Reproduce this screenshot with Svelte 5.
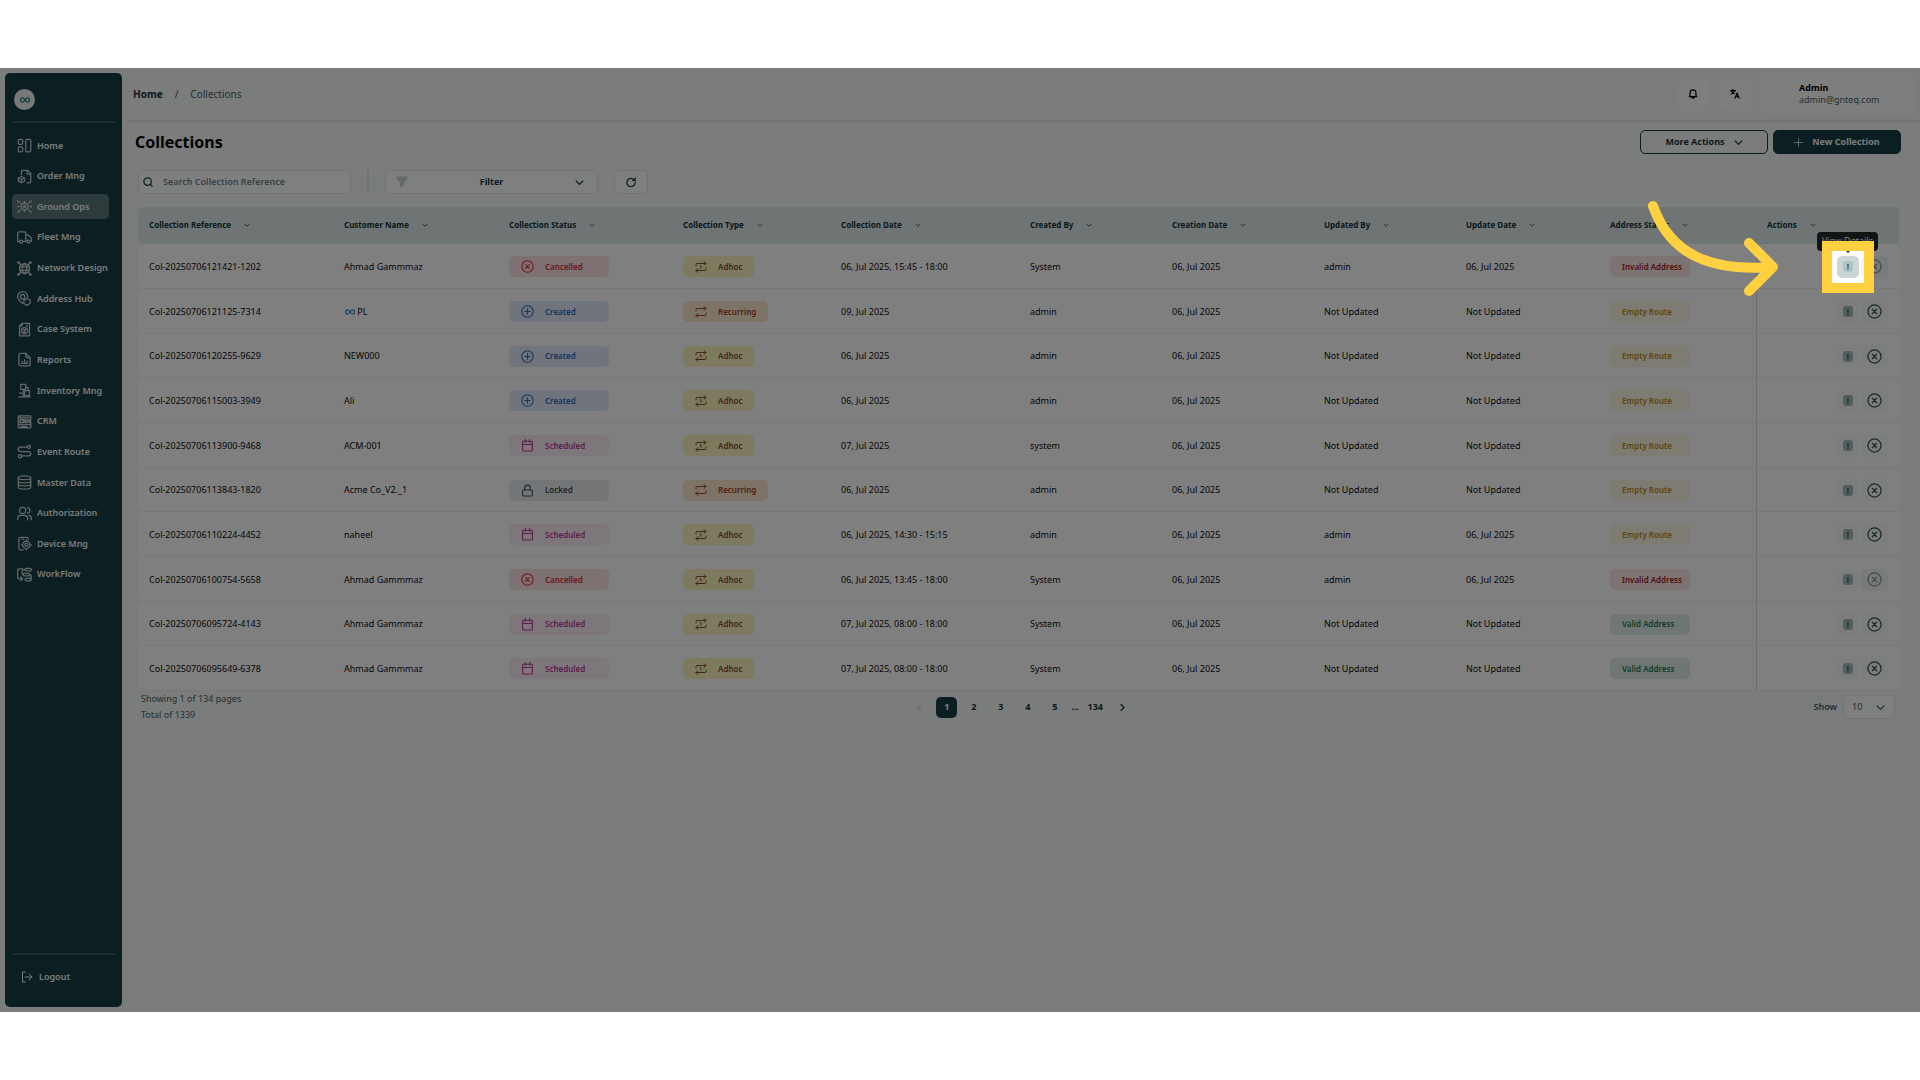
<script>
    const icons = {
        home: '<rect x="2" y="2" width="7" height="8" rx="2"/><rect x="2" y="14" width="7" height="8" rx="2"/><rect x="14" y="2" width="8" height="20" rx="2"/>',
        order: '<path d="M7 9V4q0-2 2-2h8l5 5v12q0 3-3 3h-3M16 2v4q0 2 2 2h4"/><path d="M7 12l5 2.500v5L7 22l-5-2.500v-5zM2 14.500l5 2.500 5-2.500M7 17v5"/>',
        ground: '<circle cx="12" cy="12" r="5.500"/><circle cx="12" cy="12" r="1.500"/><path d="M12 6.500V4M12 20v-2.500M0 12h3M21 12h3M1 3l4 3M23 3l-4 3M1 21l4-3M23 21l-4-3"/>',
        fleet: '<path d="M4 18H2q-1 0-1-2V5q0-2 2-2h9q2 0 2 2v13H9M14 8h4l5 5v5h-2M14 18h2"/><circle cx="6.500" cy="18.500" r="2.500"/><circle cx="18.500" cy="18.500" r="2.500"/>',
        network: '<circle cx="12" cy="12" r="8"/><path d="M4 9.500h16M4 14.500h16M12 4c-5 5-5 11 0 16M12 4c5 5 5 11 0 16M6 6L2 2M18 6l4-4M6 18l-4 4M18 18l4 4"/><circle cx="2.500" cy="2.500" r="1"/><circle cx="21.500" cy="2.500" r="1"/><circle cx="2.500" cy="21.500" r="1"/><circle cx="21.500" cy="21.500" r="1"/>',
        address: '<path d="M9 20C4 15 1 13 1 9a8 8 0 0 1 16 0v1"/><circle cx="9" cy="9" r="3.500"/><path d="M16 12l5 2.500v5L16 23l-5-3v-5z"/>',
        caseSystem: '<path d="M8 2h12v20H4V6zM8 2v4H4"/><circle cx="12" cy="14" r="5"/><path d="M9 17l6-6M10 12h2M12 16h2M16 5v2"/>',
        reports: '<path d="M14 2H6Q3 2 3 5v14q0 3 3 3h12q3 0 3-3V9M14 2v4q0 3 3 3h4zM8 18v-3M12 18v-6M16 18v-4M7 18h10"/>',
        inventory: '<rect x="6" y="2" width="8" height="8"/><rect x="12" y="12" width="8" height="8"/><path d="M10 10v12M3 22h18M4 16h6M14 7h4v5"/>',
        crm: '<path d="M2 3h20v19H2zM2 6h20M5 3v3M2 17h20M6 20h10"/><path stroke-width="2.500" d="M8 9H5v5h3M10 14V9h3v3h-2l3 2M16 14V9l2 3 2-3v5"/>',
        route: '<circle cx="19" cy="4.500" r="2.500"/><circle cx="5" cy="19.500" r="2.500"/><path d="M16 5H6q-4 0-4 3.500T6 12h12q4 0 4 3.500T18 19H8"/>',
        data: '<ellipse cx="12" cy="4.500" rx="10" ry="3"/><path d="M2 4.500v15c0 4 20 4 20 0v-15M2 9.500c0 4 20 4 20 0M2 14.500c0 4 20 4 20 0"/>',
        users: '<circle cx="9" cy="7" r="5"/><path d="M1 22v-2q0-5 5-5h6q5 0 5 5v2M17 2.500q4 1.500 4 4.500t-4 4.500M19 15q4 1 4 5v2"/>',
        device: '<path d="M10 22H5q-2 0-2-2V4q0-2 2-2h11q2 0 2 2v1M8 5h3"/><circle cx="15" cy="14" r="6"/><circle cx="15" cy="14" r="2.500"/><path d="M15 6v2M15 20v2M7 14h2M21 14h2"/>',
        workflow: '<path d="M9 3H3Q1 3 1 5v11q0 3 3 3h4M6 16l3 3-3 3"/><rect x="13" y="2" width="10" height="4" rx="2"/><rect x="10" y="10" width="10" height="4" rx="2"/><rect x="13" y="18" width="10" height="4" rx="2"/><path d="M13 4h-2q-3 0-3 4t2 4M20 12q3 0 3 3t-3 3"/>',
        logout: '<path d="M9 2H3v20h6M8 12h14M16 6l6 6-6 6"/>',
        bell: '<path d="M3 18h18l-2-3V9c0-9-14-9-14 0v6zM9 21h6"/>',
        translate: '<path d="M1 4h12M7 1v3M11 4q-2 6-8 8M4 5q2 4 6 6M12 22l5-12 5 12M14 18h6"/>',
        search: '<circle cx="11" cy="11" r="9"/><path d="M18 18l4 4"/>',
        funnel: '<path fill="currentColor" d="M2 2h20v4l-7 7v5l-6 4v-9L2 6z"/>',
        chevron: '<path d="M3 8l9 9 9-9"/>',
        left: '<path d="M15 5l-7 7 7 7"/>',
        right: '<path d="M8 4l8 8-8 8"/>',
        refresh: '<path d="M20 7a10 10 0 1 0 2 5M22 2v6h-6"/>',
        plus: '<path stroke-width="2" d="M12 1v22M1 12h22"/>',
        infinity: '<path d="M12 12c-3-5-5-5-7-5-5 0-5 10 0 10 2 0 4 0 7-5s5-5 7-5c5 0 5 10 0 10-2 0-4 0-7-5z"/>',
        Cancelled: '<circle cx="12" cy="12" r="10.500"/><path d="M8.500 8.500l7 7M15.500 8.500l-7 7"/>',
        Created: '<circle cx="12" cy="12" r="10.500"/><path d="M12 7v10M7 12h10"/>',
        Scheduled: '<rect x="3" y="4" width="18" height="18" rx="1"/><path d="M3 10h18M8 1v5M16 1v5"/>',
        Locked: '<rect x="3" y="11" width="18" height="11" rx="2"/><path d="M7 11V7q0-5 5-5t5 5v4"/>',
        Recurring: '<path d="M2 10V7q0-2 2-2h18M18 1l4 4-4 4M22 14v3q0 2-2 2H2M6 15l-4 4 4 4"/>',
        Adhoc: '<path d="M2 10V7q0-2 2-2h18M18 1l4 4-4 4M22 14v3q0 2-2 2H2M6 15l-4 4 4 4M10.500 9.500H12v5"/>',
    };

    const menu = [
        ["home", "Home"],
        ["order", "Order Mng"],
        ["ground", "Ground Ops"],
        ["fleet", "Fleet Mng"],
        ["network", "Network Design"],
        ["address", "Address Hub"],
        ["caseSystem", "Case System"],
        ["reports", "Reports"],
        ["inventory", "Inventory Mng"],
        ["crm", "CRM"],
        ["route", "Event Route"],
        ["data", "Master Data"],
        ["users", "Authorization"],
        ["device", "Device Mng"],
        ["workflow", "WorkFlow"],
    ];

    const columns = [
        ["Collection Reference", 195],
        ["Customer Name", 165],
        ["Collection Status", 174],
        ["Collection Type", 158],
        ["Collection Date", 189],
        ["Created By", 142],
        ["Creation Date", 152],
        ["Updated By", 142],
        ["Update Date", 144],
        ["Address Status", 157],
        ["Actions", 143],
    ];
    const total = columns.reduce((sum, c) => sum + c[1], 0);

    // ref, customer, status, type, date, created by, updated by, update date, address
    const none = "Not Updated";
    const rows = [
        ["Col-20250706121421-1202", "Ahmad Gammmaz", "Cancelled", "Adhoc", "06, Jul 2025, 15:45 - 18:00", "System", "admin", "06, Jul 2025", "Invalid Address"],
        ["Col-20250706121125-7314", "PL", "Created", "Recurring", "09, Jul 2025", "admin", none, none, "Empty Route"],
        ["Col-20250706120255-9629", "NEW000", "Created", "Adhoc", "06, Jul 2025", "admin", none, none, "Empty Route"],
        ["Col-20250706115003-3949", "Ali", "Created", "Adhoc", "06, Jul 2025", "admin", none, none, "Empty Route"],
        ["Col-20250706113900-9468", "ACM-001", "Scheduled", "Adhoc", "07, Jul 2025", "system", none, none, "Empty Route"],
        ["Col-20250706113843-1820", "Acme Co_V2._1", "Locked", "Recurring", "06, Jul 2025", "admin", none, none, "Empty Route"],
        ["Col-20250706110224-4452", "naheel", "Scheduled", "Adhoc", "06, Jul 2025, 14:30 - 15:15", "admin", "admin", "06, Jul 2025", "Empty Route"],
        ["Col-20250706100754-5658", "Ahmad Gammmaz", "Cancelled", "Adhoc", "06, Jul 2025, 13:45 - 18:00", "System", "admin", "06, Jul 2025", "Invalid Address"],
        ["Col-20250706095724-4143", "Ahmad Gammmaz", "Scheduled", "Adhoc", "07, Jul 2025, 08:00 - 18:00", "System", none, none, "Valid Address"],
        ["Col-20250706095649-6378", "Ahmad Gammmaz", "Scheduled", "Adhoc", "07, Jul 2025, 08:00 - 18:00", "System", none, none, "Valid Address"],
    ];

    let active = "Ground Ops";
    let page = 1;
    let search = "";
    let pageSize = 10;
</script>

{#snippet icon(name, size)}
    <svg class="icon {size}" viewBox="0 0 24 24" aria-hidden="true">{@html icons[name]}</svg>
{/snippet}

<div class="app">
    <aside>
        <div class="logo">{@render icon("infinity", "s10")}</div>
        <nav>
            {#each menu as [name, label]}
                <a href="#{name}" class:active={label === active} on:click={() => (active = label)}>
                    {@render icon(name, "s15")}
                    {label}
                </a>
            {/each}
        </nav>
        <button class="logout">{@render icon("logout", "s12")} Logout</button>
    </aside>

    <main>
        <header>
            <div class="crumbs">
                <a href="#home">Home</a>
                <span>/</span>
                <span>Collections</span>
            </div>
            <div class="account">
                <button class="round" aria-label="Notifications">{@render icon("bell", "s10")}</button>
                <button class="round" aria-label="Language">{@render icon("translate", "s10")}</button>
                <div class="user">
                    <strong>Admin</strong>
                    <span>admin@gnteq.com</span>
                </div>
            </div>
        </header>

        <div class="title">
            <h1>Collections</h1>
            <button class="more">More Actions {@render icon("chevron", "s9")}</button>
            <button class="new">{@render icon("plus", "s9")} New Collection</button>
        </div>

        <div class="tools">
            <label class="search">
                {@render icon("search", "s10")}
                <input type="text" placeholder="Search Collection Reference" aria-label="Search Collection Reference" bind:value={search} />
            </label>
            <i class="rule"></i>
            <button class="filter">
                <span class="funnel">{@render icon("funnel", "s12")}</span>
                <span>Filter</span>
                {@render icon("chevron", "s9")}
            </button>
            <button class="refresh" aria-label="Refresh">{@render icon("refresh", "s10")}</button>
        </div>

        <table>
            <colgroup>
                {#each columns as [label, width]}
                    <col style="width: {(width / total) * 100}%" />
                {/each}
            </colgroup>
            <thead>
                <tr>
                    {#each columns as [label]}
                        <th><span>{label} {@render icon("chevron", "s6")}</span></th>
                    {/each}
                </tr>
            </thead>
            <tbody>
                {#each rows as [ref, customer, status, type, date, by, updatedBy, updated, address], i}
                    <tr>
                        <td>{ref}</td>
                        <td>
                            {#if customer === "PL"}
                                <span class="linked">{@render icon("infinity", "s10")}</span>
                            {/if}
                            {customer}
                        </td>
                        <td><span class="badge status {status}">{@render icon(status, "s13")} {status}</span></td>
                        <td><span class="badge type {type}">{@render icon(type, "s12")} {type}</span></td>
                        <td>{date}</td>
                        <td>{by}</td>
                        <td>06, Jul 2025</td>
                        <td>{updatedBy}</td>
                        <td>{updated}</td>
                        <td><span class="badge address {address.split(' ')[0]}">{address}</span></td>
                        <td class="actions">
                            <div>
                                <button class="view" class:hover={i === 0} aria-label="View Details"><span>!</span></button>
                                <button class="cancel" disabled={status === "Cancelled"} aria-label="Cancel">
                                    {@render icon("Cancelled", "s15")}
                                </button>
                            </div>
                        </td>
                    </tr>
                {/each}
            </tbody>
        </table>

        <footer>
            <div class="summary">
                <div>Showing 1 of 134 pages</div>
                <div>Total of 1339</div>
            </div>
            <div class="pages">
                <button class="off" aria-label="Previous">{@render icon("left", "s9")}</button>
                {#each [1, 2, 3, 4, 5] as n}
                    <button class:current={n === page} on:click={() => (page = n)}>{n}</button>
                {/each}
                <span>...</span>
                <button>134</button>
                <button aria-label="Next">{@render icon("right", "s9")}</button>
            </div>
            <label class="show">
                Show
                <span class="select">
                    <select bind:value={pageSize}>
                        <option value={10}>10</option>
                        <option value={20}>20</option>
                        <option value={50}>50</option>
                    </select>
                    {@render icon("chevron", "s9")}
                </span>
            </label>
        </footer>
    </main>

    <div class="tooltip">View Details</div>
    <div class="spotlight"></div>
    <div class="frame"></div>
    <svg class="arrow" viewBox="0 0 130 96" aria-hidden="true">
        <path d="M6 6C23 54 63 72 126 67M102 43L126 67L102 91" />
    </svg>
</div>

<style>
    :global(body) {
        margin: 0;
        background: #fff;
    }

    .app {
        position: relative;
        display: flex;
        overflow: hidden;
        box-sizing: border-box;
        min-height: calc(100vh - 136px);
        margin: 68px 0;
        padding: 5px;
        gap: 5px;
        background: #f6f9f8;
        color: #0c0c0c;
        font-family: "Noto Sans", sans-serif;
        font-size: 9px;
        line-height: 12px;
    }

    button,
    input,
    select {
        padding: 0;
        border: none;
        outline: none;
        background: transparent;
        color: inherit;
        font: inherit;
    }

    button {
        cursor: pointer;
        display: flex;
        align-items: center;
        justify-content: center;
    }

    a {
        color: inherit;
        text-decoration: none;
    }

    .icon {
        flex: none;
        fill: none;
        stroke: currentColor;
        stroke-width: 2;
        stroke-linecap: round;
        stroke-linejoin: round;
    }

    .s6 { width: 6px; height: 6px; stroke-width: 3; }
    .s9 { width: 9px; height: 9px; stroke-width: 3; }
    .s10 { width: 10px; height: 10px; stroke-width: 3; }
    .s12 { width: 12px; height: 12px; }
    .s13 { width: 13px; height: 13px; }
    .s15 { width: 15px; height: 15px; }

    aside {
        display: flex;
        flex-direction: column;
        flex: none;
        box-sizing: border-box;
        width: 117px;
        padding: 16px 6px 18px 7px;
        border-radius: 5px;
        background: #173f44;
        color: #f2f4f4;
        font-weight: 600;
    }

    .logo {
        display: grid;
        place-items: center;
        width: 21px;
        height: 21px;
        margin-left: 2px;
        border-radius: 50%;
        background: #f0f0f0;
        color: #197b80;
    }

    nav {
        display: flex;
        flex-direction: column;
        justify-content: space-between;
        height: 454px;
        margin-top: 11px;
        padding-top: 10px;
        border-top: 2px solid #3d5c60;
    }

    nav a {
        display: flex;
        align-items: center;
        gap: 5px;
        width: 92px;
        height: 25px;
        padding-left: 5px;
        border-radius: 5px;
        white-space: nowrap;
    }

    nav a.active {
        background: #5a7679;
    }

    nav .icon {
        opacity: 0.8;
    }

    .logout {
        justify-content: flex-start;
        gap: 6px;
        margin-top: auto;
        padding: 16px 9px 6px;
        border-top: 2px solid #3d5c60;
    }

    main {
        flex: 1;
        min-width: 0;
    }

    header {
        display: flex;
        align-items: center;
        justify-content: space-between;
        height: 47px;
        border-bottom: 2px solid #e6eaea;
        margin-right: -5px;
    }

    .crumbs {
        display: flex;
        gap: 12px;
        margin: 0 0 6px 6px;
        font-size: 10px;
        color: #4b5f62;
    }

    .crumbs a {
        color: #12343a;
        font-weight: 700;
    }

    .account {
        display: flex;
        align-items: center;
        gap: 10px;
        margin: 0 5px 6px 0;
    }

    .round {
        width: 32px;
        height: 32px;
        border-radius: 8px;
        background: #fafcfb;
    }

    .user {
        display: flex;
        flex-direction: column;
        justify-content: center;
        box-sizing: border-box;
        width: 154px;
        height: 42px;
        padding-left: 38px;
        border-radius: 8px;
        background: #fafcfb;
        color: #4b5f62;
    }

    .user strong {
        color: #000;
        font-weight: 700;
    }

    .title {
        display: flex;
        align-items: center;
        gap: 5px;
        padding: 7px 14px 0 8px;
    }

    h1 {
        flex: 1;
        margin: 0;
        color: #000;
        font-size: 16px;
        line-height: 26px;
        font-weight: 700;
    }

    .more,
    .new {
        box-sizing: border-box;
        gap: 9px;
        width: 128px;
        height: 24px;
        border: 1px solid #173f44;
        border-radius: 5px;
        color: #12343a;
        font-weight: 700;
    }

    .new {
        background: #173f44;
        color: #f2f4f4;
    }

    .tools {
        display: flex;
        align-items: center;
        gap: 16px;
        padding: 15px 0 13px 11px;
        color: #173f44;
    }

    .search,
    .filter,
    .refresh,
    .select {
        display: flex;
        align-items: center;
        box-sizing: border-box;
        height: 24px;
        border: 1px solid #e4e8e8;
        border-radius: 5px;
        background: #fdfefe;
    }

    .search {
        width: 213px;
        padding-left: 4px;
        gap: 10px;
    }

    .search input {
        flex: 1;
        min-width: 0;
        font-weight: 600;
    }

    .search input::placeholder {
        color: #75858a;
        font-weight: 600;
        opacity: 1;
    }

    .rule {
        width: 2px;
        height: 24px;
        background: #dfe4e4;
    }

    .filter {
        justify-content: space-between;
        width: 213px;
        padding: 0 13px 0 10px;
        color: #12343a;
        font-weight: 700;
    }

    .funnel {
        display: flex;
        color: #cdd3d3;
    }

    .refresh {
        width: 34px;
    }

    table {
        width: calc(100% - 27px);
        margin-left: 11px;
        table-layout: fixed;
        border-spacing: 0;
    }

    th,
    td {
        box-sizing: border-box;
        padding: 0 0 0 11px;
        text-align: left;
        white-space: nowrap;
    }

    th {
        height: 37px;
        padding-bottom: 2px;
        background: #dfe8e9;
        color: #12343a;
        font-size: 8px;
        font-weight: 700;
    }

    th span {
        display: flex;
        align-items: center;
        gap: 13px;
    }

    th:first-child {
        border-radius: 5px 0 0 5px;
    }

    th:last-child {
        border-radius: 0 5px 5px 0;
    }

    td {
        height: 45px;
        padding-top: 1px;
        border-bottom: 1px solid #eff2f2;
        background: #fff;
    }

    tr:nth-child(3n) td {
        height: 44px;
    }

    td:first-child {
        border-radius: 5px 0 0 5px;
    }

    td:last-child {
        border-left: 1px solid #cfdcdc;
        border-radius: 0 5px 5px 0;
    }

    .linked {
        display: inline-flex;
        padding-left: 1px;
        vertical-align: middle;
        color: #4d7fc8;
    }

    .badge {
        display: inline-flex;
        align-items: center;
        box-sizing: border-box;
        height: 21px;
        padding: 0 12px;
        gap: 11px;
        border-radius: 5px;
        font-size: 8px;
        font-weight: 600;
        vertical-align: middle;
    }

    .status { width: 100px; }
    .address { width: 80px; }

    .Cancelled { background: #fbe2e2; color: #d8303a; }
    .Created { background: #e0eafa; color: #2c67c4; }
    .Scheduled { background: #faeff6; color: #b83c9c; }
    .Locked { background: #e7ebee; color: #3e4e5a; }
    .Adhoc { background: #fbf4c0; color: #80501c; }
    .Recurring { background: #fbe6cf; color: #a04426; }
    .Invalid { background: #fae6e7; color: #a81828; }
    .Empty { background: #fcf6e4; color: #c08a1c; }
    .Valid { background: #e1ede8; color: #1f7a50; }

    .actions div {
        display: flex;
        justify-content: flex-end;
        gap: 2px;
        padding-right: 11px;
    }

    .view,
    .cancel {
        width: 22px;
        height: 22px;
        border-radius: 5px;
        background: #f8fafa;
        color: #2f5257;
    }

    .view span {
        width: 10px;
        height: 11px;
        border-radius: 3px;
        background: #a9b9b9;
        font-size: 8px;
        line-height: 11px;
        font-weight: 700;
    }

    .view.hover {
        background: #ccd6d6;
    }

    .view.hover span {
        background: #b0c3c3;
    }

    .cancel {
        width: 27px;
    }

    .cancel:disabled {
        background: #f3f6f6;
        color: #869698;
    }

    footer {
        display: grid;
        grid-template-columns: 1fr auto 1fr;
        align-items: center;
        padding: 0 14px;
        color: #4b5f62;
    }

    .summary {
        line-height: 16px;
    }

    .pages {
        display: flex;
        align-items: center;
        gap: 6px;
        color: #12343a;
        font-weight: 700;
    }

    .pages button {
        min-width: 21px;
        height: 21px;
        border-radius: 5px;
    }

    .pages .current {
        background: #173f44;
        color: #fff;
    }

    .pages .off {
        color: #d0d8d8;
    }

    .show {
        display: flex;
        align-items: center;
        justify-content: flex-end;
        gap: 6px;
        padding-right: 6px;
        font-weight: 600;
    }

    .select {
        width: 52px;
        padding: 0 9px 0 8px;
        font-weight: 400;
    }

    .select select {
        flex: 1;
        min-width: 0;
        appearance: none;
    }

    .tooltip {
        position: absolute;
        top: 164px;
        right: 42px;
        width: 61px;
        height: 19px;
        border-radius: 4px;
        background: #262b2b;
        color: #fff;
        line-height: 18px;
        text-align: center;
    }

    .tooltip::after {
        content: "";
        position: absolute;
        top: 18px;
        left: 28px;
        border: 3px solid transparent;
        border-top-color: #262b2b;
    }

    /* dims everything but the highlighted button */
    .spotlight {
        position: absolute;
        top: 183px;
        right: 56px;
        width: 32px;
        height: 32px;
        box-shadow: 0 0 0 9999px rgba(0, 0, 0, 0.5);
    }

    .frame {
        position: absolute;
        top: 173px;
        right: 46px;
        width: 32px;
        height: 32px;
        border: 10px solid #ffd040;
    }

    .arrow {
        position: absolute;
        top: 132px;
        right: 143px;
        width: 130px;
        height: 96px;
        overflow: visible;
        fill: none;
        stroke: #ffd040;
        stroke-width: 10;
        stroke-linecap: round;
        stroke-linejoin: round;
    }
</style>
